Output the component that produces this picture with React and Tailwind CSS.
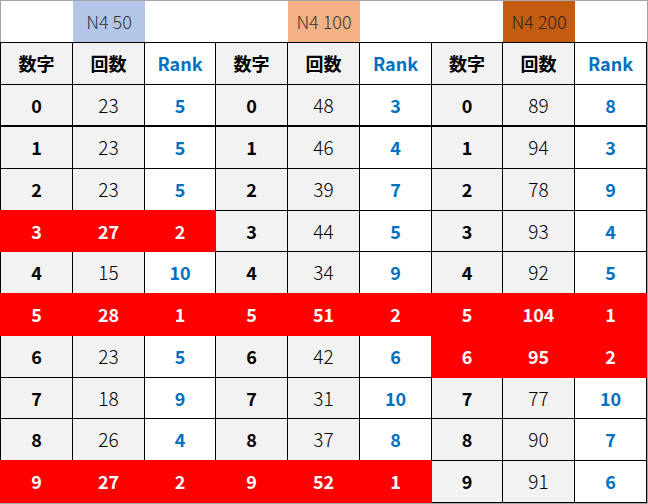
import React from "react";

const widths = ["w-[73px]", "w-[72px]", "w-[71px]", "w-[72px]", "w-[72px]", "w-[72px]", "w-[71px]", "w-[72px]", "w-[72px]"];
const rowHeights = ["h-[42px]", "h-[42px]", "h-[42px]", "h-[41px]", "h-[42px]", "h-[42px]", "h-[42px]", "h-[41px]", "h-[42px]", "h-[42px]"];

const groups = [
  { counts: [23, 23, 23, 27, 15, 28, 23, 18, 26, 27], ranks: [5, 5, 5, 2, 10, 1, 5, 9, 4, 2], red: [3, 5, 9] },
  { counts: [48, 46, 39, 44, 34, 51, 42, 31, 37, 52], ranks: [3, 4, 7, 5, 9, 2, 6, 10, 8, 1], red: [5, 9] },
  { counts: [89, 94, 78, 93, 92, 104, 95, 77, 90, 91], ranks: [8, 3, 9, 4, 5, 1, 2, 10, 7, 6], red: [5, 6] },
];

const font = { fontFamily: '"Noto Sans CJK JP", "Noto Sans", sans-serif' };

function isRed(r, c) {
  if (r < 0 || r > 9 || c < 0 || c > 8) return false;
  return groups[Math.floor(c / 3)].red.includes(r);
}

export default function App() {
  const rows = [];
  for (let r = 0; r < 10; r++) {
    const cells = [];
    for (let c = 0; c < 9; c++) {
      const g = groups[Math.floor(c / 3)];
      const kind = c % 3;
      const red = isRed(r, c);
      const rRed = red || isRed(r, c + 1);
      const bRed = red || isRed(r + 1, c);
      let bg = kind === 2 ? "bg-white" : "bg-[#f2f2f2]";
      if (red) bg = "bg-[#ff0000]";
      let text;
      let tcls;
      if (kind === 0) {
        text = r;
        tcls = red ? "font-bold text-white text-[18px]" : "font-bold text-black text-[18px]";
      } else if (kind === 1) {
        text = g.counts[r];
        tcls = red ? "font-bold text-white text-[18px]" : "font-light text-black text-[19px]";
      } else {
        text = g.ranks[r];
        tcls = red ? "font-bold text-white text-[18px]" : "font-bold text-[#0070c0] text-[18px]";
      }
      cells.push(
        <div
          key={c}
          className={[
            widths[c],
            "flex items-center justify-center border-r",
            rRed ? "border-r-[#ff0000]" : "border-r-black",
            r === 0 ? "border-b-2" : "border-b",
            bRed ? "border-b-[#ff0000]" : "border-b-black",
            c === 0 ? (red ? "border-l border-l-[#ff0000]" : "border-l border-l-black") : "",
            bg,
            tcls,
          ].join(" ")}
        >
          {text}
        </div>
      );
    }
    rows.push(
      <div key={r} className={"flex " + rowHeights[r]}>
        {cells}
      </div>
    );
  }

  const headerLabels = ["数字", "回数", "Rank"];

  return (
    <div className="w-[648px] h-[504px] bg-white border-t border-r border-b border-[#a6a6a6]" style={font}>
      <div className="flex h-[41px] text-[18px] font-light text-[#333333]">
        <div className="w-[73px] border-l border-l-[#a6a6a6]" />
        <div className="w-[72px] bg-[#b4c6e7] flex items-center justify-center">N4 50</div>
        <div className="w-[71px]" />
        <div className="w-[72px]" />
        <div className="w-[72px] bg-[#f4b183] flex items-center justify-center">N4 100</div>
        <div className="w-[72px]" />
        <div className="w-[71px]" />
        <div className="w-[72px] bg-[#c55a11] flex items-center justify-center text-[#262626]">N4 200</div>
        <div className="w-[72px]" />
      </div>
      <div className="flex h-[43px]">
        {widths.map((w, c) => {
          const kind = c % 3;
          return (
            <div
              key={c}
              className={[
                w,
                "flex items-center justify-center text-[18px] font-bold border-t border-b border-r border-black",
                c === 0 ? "border-l" : "",
                kind === 2 ? "bg-white text-[#0070c0]" : "bg-[#f2f2f2] text-black",
              ].join(" ")}
            >
              {headerLabels[kind]}
            </div>
          );
        })}
      </div>
      {rows}
    </div>
  );
}
